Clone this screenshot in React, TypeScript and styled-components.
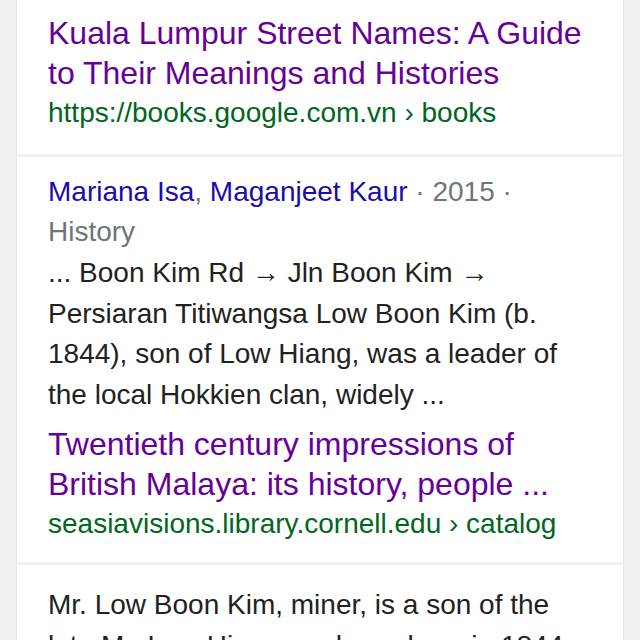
import styled, { createGlobalStyle } from "styled-components";

const GlobalStyle = createGlobalStyle`
    html, body {
        margin: 0;
        padding: 0;
        background: #f1f1f1;
        font-family: "Liberation Sans", Arial, Helvetica, sans-serif;
    }
`;

const Page = styled.div`
    width: 640px;
    height: 640px;
    overflow: hidden;
    background: #f1f1f1;
    display: flex;
    flex-direction: column;
    gap: 3px;
    padding: 0 16px;
    box-sizing: border-box;
`;

const Card = styled.div<{ $top: number; $bottom: number }>`
    background: #fff;
    border-left: 1px solid #e4e4e4;
    border-right: 1px solid #e4e4e4;
    padding: ${(p) => p.$top}px 12px ${(p) => p.$bottom}px 31px;
    flex-shrink: 0;
`;

const Result = styled.div<{ $gap?: number }>`
    margin-top: ${(p) => p.$gap || 0}px;
`;

const Title = styled.div`
    color: #660099;
    font-size: 32px;
    line-height: 40px;
    white-space: nowrap;
`;

const Url = styled.div`
    color: #006621;
    font-size: 28px;
    line-height: 39px;
    white-space: nowrap;
`;

const Meta = styled.div`
    color: #70757a;
    font-size: 28px;
    line-height: 40px;
    white-space: nowrap;
`;

const Author = styled.span`
    color: #1a0dab;
`;

const Snippet = styled.div`
    color: #222;
    font-size: 28px;
    line-height: 40.5px;
    margin-top: 1px;
    white-space: nowrap;
`;

export default function App() {
    return (
        <>
            <GlobalStyle />
            <Page>
                <Card $top={13} $bottom={22}>
                    <Title>
                        Kuala Lumpur Street Names: A Guide
                        <br />
                        to Their Meanings and Histories
                    </Title>
                    <Url>https://books.google.com.vn › books</Url>
                </Card>

                <Card $top={15} $bottom={19}>
                    <Meta>
                        <Author>Mariana Isa</Author>, <Author>Maganjeet Kaur</Author> · 2015 ·
                        <br />
                        History
                    </Meta>
                    <Snippet>
                        ... Boon Kim Rd → Jln Boon Kim →
                        <br />
                        Persiaran Titiwangsa Low Boon Kim (b.
                        <br />
                        1844), son of Low Hiang, was a leader of
                        <br />
                        the local Hokkien clan, widely ...
                    </Snippet>
                    <Result $gap={9}>
                        <Title>
                            Twentieth century impressions of
                            <br />
                            British Malaya: its history, people ...
                        </Title>
                        <Url>seasiavisions.library.cornell.edu › catalog</Url>
                    </Result>
                </Card>

                <Card $top={19} $bottom={20}>
                    <Snippet>
                        Mr. Low Boon Kim, miner, is a son of the
                        <br />
                        late Mr. Low Hiang, and was born in 1844
                    </Snippet>
                </Card>
            </Page>
        </>
    );
}
